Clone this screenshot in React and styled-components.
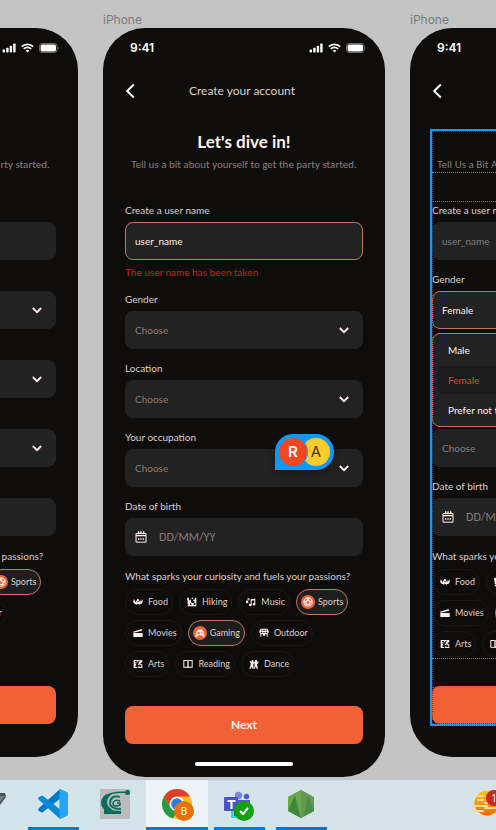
import React, { useId, useState } from "react";
import styled, { createGlobalStyle, css } from "styled-components";

const color = {
  canvas: "#c4c4c4",
  screen: "#0e0d0b",
  field: "#222222",
  coral: "#c4755c",
  orange: "#f26135",
  text: "#ddd0cd",
  bright: "#fff1ed",
  muted: "#857d7b",
  error: "#cc1c1c",
  select: "#0d99ff",
};

const GlobalStyle = createGlobalStyle`
  *, *::before, *::after { box-sizing: border-box; }
  html, body { margin: 0; background: ${color.canvas}; }
  body, button, input, select { font-family: Lato, Carlito, "Open Sans", sans-serif; }
  button { border: 0; padding: 0; background: none; cursor: pointer; }
  svg { display: block; flex: none; }
`;

const Desktop = styled.div`
  display: flex;
  flex-direction: column;
  min-height: 100vh;
`;

const Canvas = styled.main`
  flex: 1;
  display: flex;
  justify-content: center;
  align-items: flex-start;
  gap: 25px;
  padding: 12px 8px 3px 0;
  overflow: hidden;
  background: ${color.canvas};
`;

const Frame = styled.section`
  flex: none;
  width: 282px;
`;

const FrameName = styled.h2`
  margin: 0;
  height: 16px;
  font: 400 12px/16px Inter, sans-serif;
  color: #7b7b7b;
`;

const Screen = styled.div`
  display: flex;
  flex-direction: column;
  padding: 0 22px 11px;
  border-radius: 42px;
  background: ${color.screen};
  color: ${color.text};
`;

const StatusBar = styled.div`
  display: flex;
  align-items: center;
  justify-content: space-between;
  height: 40px;
  padding: 0 0 0 5px;
  margin-right: -3px;
`;

const Clock = styled.span`
  font: 600 12px/16px Inter, sans-serif;
  color: #fff;
`;

const StatusIcons = styled.div`
  display: flex;
  align-items: center;
  gap: 5px;
`;

const NavBar = styled.header`
  display: grid;
  grid-template-columns: 12px 1fr 12px;
  align-items: center;
  height: 46px;
  margin-bottom: 17px;
  padding-right: 4px;
`;

const NavTitle = styled.h3`
  margin: 0;
  text-align: center;
  font-size: 12px;
  line-height: 18px;
  font-weight: 400;
`;

const Body = styled.form`
  position: relative;
  display: flex;
  flex-direction: column;
`;

const Title = styled.h1`
  margin: 0 0 4px;
  text-align: center;
  font-size: 17px;
  line-height: 22px;
  font-weight: 700;
  color: ${color.bright};
`;

const Subtitle = styled.p`
  display: flex;
  justify-content: center;
  margin: 0 0 28px;
  font-family: Carlito, Lato, sans-serif;
  font-size: 11px;
  line-height: 16px;
  white-space: nowrap;
  color: ${color.muted};
`;

const Group = styled.div`
  position: relative;
  display: flex;
  flex-direction: column;
  margin-bottom: 10px;
`;

const labelText = css`
  margin: 0 0 3px;
  font-size: 10px;
  line-height: 18px;
  font-weight: 400;
  color: ${color.text};
`;

const Label = styled.label`${labelText}`;

const Box = styled.div`
  display: flex;
  align-items: center;
  height: 38px;
  padding: 0 13px 0 9px;
  gap: 12px;
  border: 1px solid ${(p) => (p.$active ? color.coral : color.field)};
  border-radius: 8px;
  background: ${color.field};
`;

const control = css`
  flex: 1;
  min-width: 0;
  padding: 0;
  border: 0;
  outline: 0;
  background: transparent;
  appearance: none;
  font-size: 10px;
  line-height: 16px;
`;

const TextInput = styled.input`
  ${control}
  color: ${color.bright};
  &::placeholder { color: ${color.muted}; opacity: 1; }
`;

const DateInput = styled(TextInput)`
  font-family: Carlito, Lato, sans-serif;
  font-size: 12px;
`;

const Select = styled.select`
  ${control}
  color: ${(p) => (p.value ? color.bright : color.muted)};
`;

const ErrorText = styled.p`
  margin: 4px 0 0;
  font-size: 10px;
  line-height: 16px;
  color: ${color.error};
`;

const Menu = styled.ul`
  position: absolute;
  z-index: 2;
  top: 100%;
  left: 0;
  right: 0;
  display: flex;
  flex-direction: column;
  gap: 2px;
  margin: 4px 0 0;
  padding: 2px 5px;
  border: 1px solid ${color.coral};
  border-radius: 8px;
  background: ${color.field};
  list-style: none;
`;

const Option = styled.li`
  padding: 0 10px;
  border-radius: 6px;
  font-size: 10px;
  line-height: 28px;
  color: ${(p) => (p.$chosen ? "#d3502b" : color.bright)};
  background: ${(p) => (p.$chosen ? "#1b1b1b" : "transparent")};
`;

const Passions = styled.fieldset`
  min-width: 0;
  margin: 1px 0 29px;
  padding: 0;
  border: 0;
`;

const Legend = styled.legend`
  ${labelText}
  margin-bottom: 4px;
  padding: 0;
  white-space: nowrap;
`;

const ChipRows = styled.div`
  display: flex;
  flex-direction: column;
  gap: 5px;
`;

const ChipRow = styled.div`
  display: flex;
  gap: 6px;
`;

const Chip = styled.button`
  display: flex;
  align-items: center;
  gap: ${(p) => (p.$on ? 3 : 5)}px;
  height: 26px;
  padding: 0 4px 0 ${(p) => (p.$on ? 4 : 7)}px;
  border: 1px solid ${(p) => (p.$on ? color.coral : "#1a1917")};
  border-radius: 13px;
  background: ${(p) => (p.$on ? "#1e1e1e" : "transparent")};
  font-size: 9px;
  line-height: 14px;
  color: ${color.text};
`;

const ChipIcon = styled.span`
  display: grid;
  place-items: center;
  width: ${(p) => (p.$on ? 14 : 10)}px;
  height: 14px;
  border-radius: 50%;
  background: ${(p) => (p.$on ? color.orange : "transparent")};
`;

const NextButton = styled.button`
  height: 38px;
  border-radius: 8px;
  background: ${color.orange};
  font-size: 12px;
  line-height: 18px;
  font-weight: 700;
  color: ${color.bright};
`;

const HomeIndicator = styled.div`
  align-self: center;
  width: 98px;
  height: 4px;
  margin-top: 18px;
  border-radius: 2px;
  background: #fff;
`;

const SelectionOutline = styled.div`
  position: absolute;
  z-index: 3;
  inset: -2px;
  display: flex;
  flex-direction: column;
  justify-content: space-between;
  padding: 41px 0 36px;
  border: 2px solid ${color.select};
  outline: 1px dotted #0d5b96;
  outline-offset: -3px;
  pointer-events: none;
`;

const SpacingBand = styled.div`
  height: 30px;
  border: dotted #2391e6;
  border-width: 1px 0;
`;

const Collaborators = styled.div`
  position: absolute;
  z-index: 2;
  top: 6px;
  right: 29px;
  display: flex;
  padding: 4px;
  border-radius: 18px 18px 18px 0;
  background: ${color.select};
  box-shadow: 0 3px 8px rgba(0, 0, 0, 0.3);
`;

const Avatar = styled.span`
  display: grid;
  place-items: center;
  width: 28px;
  height: 28px;
  border-radius: 50%;
  font: ${(p) => (p.$bold ? 600 : 400)} 15px/20px Inter, sans-serif;
  color: ${(p) => (p.$bold ? "#fff" : "#44330a")};
  background: ${(p) => p.$tone};
  & + & { margin-left: -5px; }
  &:first-child { z-index: 1; box-shadow: 0 0 0 1px ${color.select}; }
`;

const Taskbar = styled.nav`
  display: flex;
  height: 50px;
  overflow: hidden;
  background: linear-gradient(90deg, #d3e4eb, #d7e3e9);
`;

const Task = styled.button`
  flex: none;
  display: grid;
  grid-template-rows: 47px 3px;
  justify-items: center;
  width: 62px;
  background: ${(p) => (p.$active ? "#edf3f6" : "transparent")};
  &:first-child { margin-left: -40px; }
  &:last-child { margin-left: auto; margin-right: -22px; }
  &::after {
    content: "";
    width: ${(p) => (p.$active ? 62 : 51)}px;
    height: 3px;
    background: ${(p) => (p.$open ? "#0078d4" : "transparent")};
  }
`;

const TaskIcon = styled.span`
  position: relative;
  align-self: center;
  display: block;
`;

const Badge = styled.span`
  position: absolute;
  left: ${(p) => p.$left}px;
  top: ${(p) => p.$top}px;
  display: grid;
  place-items: center;
  width: ${(p) => p.$size}px;
  height: ${(p) => p.$size}px;
  border-radius: 50%;
  background: ${(p) => p.$tone};
  color: #fff;
  font: 400 10px/12px "Open Sans", sans-serif;
`;

const chipArt = {
  Food: (
    <path d="M0 8h2v4h2V8h2v5l3 3v-4l3-2V6h5v4l3 2v4l3-3V8h2v4h2V8h2v8l-4 5h-3l-3 2-4-3-4 3-3-2H5l-4-5zM12 13v3h2v-3zm4 0v3h2v-3z" fillRule="evenodd" />
  ),
  Hiking: (
    <path d="M1 2h5v6l3 4V8h3v7l3 3h5l4-5h-5V8h4V2h5v26H2v-4h4l-4-4V10H0zM20 18v6h5v-6zM9 19v5h4v-4zM14 2h4v4h-4z" fillRule="evenodd" />
  ),
  Music: (
    <path d="M5 2l6 4v3L7 7v8a4 4 0 1 1-2-4zM14 7l14-2v17a4 4 0 1 1-3-4v-8l-8 1v13a4 4 0 1 1-3-4z" />
  ),
  Sports: (
    <path fillRule="evenodd" d="M15 1a14 14 0 1 0 0 28 14 14 0 0 0 0-28zm-2 4v3l-5 4-3-1 3-5zm4 0l5 1 3 5-3 1-5-4zm-2 6l5 4-2 5h-6l-2-5zM4 15l3 2 1 5-2 1zm22 0v5l-2 3-2-1 1-5zM12 23h6l1 2-4 1-4-1z" />
  ),
  Movies: <path d="M0 11L26 3l1 5L2 14zM1 15h28v12H1z" />,
  Gaming: (
    <path fillRule="evenodd" d="M8 5c1-2 3-3 5-3h4c2 0 4 1 5 3l-1 2h3l5 18-4 3-6-6h-8l-6 6-4-3L6 7h3zm3 1h8V4h-8zM9 11v3H6v3h3v3h3v-3h3v-3h-3v-3zm10 0v3h4v-3zm-1 5v3h4v-3z" />
  ),
  Outdoor: (
    <path fillRule="evenodd" d="M5 2h20l4 6v7h-3v11h-3v-7h-5v4h-6v-4H7v7H4V15H1V8zm2 4v3h3V6zm6 0v3h4V6zm7 0v3h3V6zM5 12v3h5v-3zm8 0v3h4v-3zm7 0v3h5v-3z" />
  ),
  Arts: (
    <path fillRule="evenodd" d="M2 3h18v3H6v4h5v3H6l4 5-3 3v3h6v3H2zM22 3h6v5l-9 9-5 2 2-5zM12 7h4v3h-4zM21 16h7v11H16v-6h3v3h6v-5h-4z" />
  ),
  Reading: (
    <path fillRule="evenodd" d="M1 3h12l2 2 2-2h12v23H17l-2 2-2-2H1zm3 3v17h9V6zm13 0v17h9V6z" />
  ),
  Dance: (
    <path fillRule="evenodd" d="M4 5l4 4V3h5v6l3-2v5l-3 3v5l1 9h-4l-2-6-3 6H1l4-11v-6L2 9zM19 3h5v6l4-3v6l-4 4 1 5 2 8h-4l-3-7-2 7h-3l2-12-1-6z" />
  ),
};

const passionRows = [
  ["Food", "Hiking", "Music", "Sports"],
  ["Movies", "Gaming", "Outdoor"],
  ["Arts", "Reading", "Dance"],
];

function StatusGlyphs() {
  return (
    <StatusIcons>
      <svg width="14" height="10" viewBox="0 0 14 10" fill="#fff" aria-label="Signal">
        <rect x="0.600" y="6.500" width="2.400" height="3" rx=".7" />
        <rect x="4.200" y="4.800" width="2.400" height="4.700" rx=".7" />
        <rect x="7.700" y="2.800" width="2.400" height="6.700" rx=".7" />
        <rect x="11.200" y="0.500" width="2.400" height="9" rx=".7" />
      </svg>
      <svg width="13" height="10" viewBox="0 0 13 10" fill="none" stroke="#fff" strokeWidth="1.7" aria-label="Wi-Fi">
        <path d="M.8 3.6a8.2 8.2 0 0 1 11.4 0M2.8 5.9a5.2 5.2 0 0 1 7.4 0" />
        <path d="M6.5 9.4L4.7 7.6a2.6 2.6 0 0 1 3.6 0z" fill="#fff" stroke="none" />
      </svg>
      <svg width="20" height="10" viewBox="0 0 20 10" aria-label="Battery">
        <rect x=".5" y=".5" width="17.6" height="9" rx="2.6" fill="none" stroke="#6d6c6b" />
        <rect x="1.6" y="1.6" width="15.4" height="6.8" rx="1.6" fill="#fff" />
        <path d="M18.8 3.4c1 .5 1 2.700 0 3.200z" fill="#6d6c6b" />
      </svg>
    </StatusIcons>
  );
}

function ChevronDown() {
  return (
    <svg width="10" height="10" viewBox="0 0 10 10" fill="none" stroke={color.bright} strokeWidth="1.8">
      <path d="M.8 3L5 7.200 9.200 3" />
    </svg>
  );
}

function CalendarIcon() {
  return (
    <svg width="12" height="12" viewBox="0 0 36 36" fill="none" stroke={color.bright} strokeWidth="3">
      <path d="M3 7.500h30v26H3z" />
      <path d="M3 14h30M11 1v9M18 1v9M26 1v9" strokeWidth="4" />
      <path d="M9 24h4m3 0h4m3 0h4" strokeWidth="4" />
    </svg>
  );
}

function SelectField({ label, menu, children }) {
  const id = useId();
  const [value, setValue] = useState(menu || "");
  const options = ["Male", "Female", "Prefer not to say"];
  return (
    <Group>
      <Label htmlFor={id}>{label}</Label>
      <Box $active={Boolean(menu)}>
        <Select id={id} value={value} onChange={(e) => setValue(e.target.value)}>
          <option value="">Choose</option>
          {label === "Gender" && options.map((o) => <option key={o}>{o}</option>)}
        </Select>
        <ChevronDown />
      </Box>
      {menu && (
        <Menu role="listbox" aria-label={label}>
          {options.map((o) => (
            <Option
              key={o}
              role="option"
              aria-selected={o === value}
              $chosen={o === value}
              onClick={() => setValue(o)}
            >
              {o}
            </Option>
          ))}
        </Menu>
      )}
      {children}
    </Group>
  );
}

function PassionPicker({ initial }) {
  const [chosen, setChosen] = useState(initial);
  const toggle = (name) =>
    setChosen((c) => (c.includes(name) ? c.filter((n) => n !== name) : [...c, name]));
  return (
    <Passions>
      <Legend>What sparks your curiosity and fuels your passions?</Legend>
      <ChipRows>
        {passionRows.map((row) => (
          <ChipRow key={row[0]}>
            {row.map((name) => {
              const on = chosen.includes(name);
              return (
                <Chip key={name} type="button" $on={on} aria-pressed={on} onClick={() => toggle(name)}>
                  <ChipIcon $on={on}>
                    <svg width="10" height="10" viewBox="0 0 30 30" fill={color.bright}>
                      {chipArt[name]}
                    </svg>
                  </ChipIcon>
                  {name}
                </Chip>
              );
            })}
          </ChipRow>
        ))}
      </ChipRows>
    </Passions>
  );
}

function Phone({ subtitle, username = "", error, gender, passions, shared, selected }) {
  const id = useId();
  return (
    <Frame>
      <FrameName>iPhone</FrameName>
      <Screen>
        <StatusBar>
          <Clock>9:41</Clock>
          <StatusGlyphs />
        </StatusBar>
        <NavBar>
          <button type="button" aria-label="Back">
            <svg width="12" height="16" viewBox="0 0 12 16" fill="none" stroke="#fff" strokeWidth="2">
              <path d="M8.800 1.500L2.200 8 8.800 14.500" />
            </svg>
          </button>
          <NavTitle>Create your account</NavTitle>
        </NavBar>
        <Body onSubmit={(e) => e.preventDefault()}>
          <Title>Let's dive in!</Title>
          <Subtitle>{subtitle}</Subtitle>
          <Group>
            <Label htmlFor={`${id}-name`}>Create a user name</Label>
            <Box $active={Boolean(error)}>
              <TextInput id={`${id}-name`} defaultValue={username} placeholder="user_name" />
            </Box>
            {error && <ErrorText role="alert">{error}</ErrorText>}
          </Group>
          <SelectField label="Gender" menu={gender} />
          <SelectField label="Location" />
          <SelectField label="Your occupation">
            {shared && (
              <Collaborators>
                <Avatar $tone="#f24822" $bold>R</Avatar>
                <Avatar $tone="#ffcd29">A</Avatar>
              </Collaborators>
            )}
          </SelectField>
          <Group>
            <Label htmlFor={`${id}-date`}>Date of birth</Label>
            <Box>
              <CalendarIcon />
              <DateInput id={`${id}-date`} placeholder="DD/MM/YY" />
            </Box>
          </Group>
          <PassionPicker initial={passions} />
          <NextButton type="submit">Next</NextButton>
          {selected && (
            <SelectionOutline>
              <SpacingBand />
              <SpacingBand />
            </SelectionOutline>
          )}
        </Body>
        <HomeIndicator />
      </Screen>
    </Frame>
  );
}

function PenIcon() {
  return (
    <svg width="30" height="30" viewBox="0 0 30 30">
      <path d="M17 4h12l1 4-9 12-7-5z" fill="#4a4f52" />
      <path d="M21 7h8l-7 9z" fill="#777d80" />
    </svg>
  );
}

function CodeIcon() {
  return (
    <svg width="30" height="30" viewBox="0 0 30 30">
      <path d="M22 0L1 19c-1 1-1 2 0 3l2 1c1 1 1.500.500 2 0L23 9z" fill="#0179cb" />
      <path d="M22 30L1 11c-1-1-1-2 0-3l2-1c1-1 1.500-.500 2 0L23 21z" fill="#0b8ad8" />
      <path d="M22 0l7 3c.7.300 1 1 1 1.600v20.800c0 .7-.3 1.300-1 1.600l-7 3c-.8-.5-.6-1.500-.6-2.500V2.500c0-1-.2-2 .6-2.500z" fill="#27a5f3" />
    </svg>
  );
}

function OrbitIcon() {
  return (
    <svg width="30" height="30" viewBox="0 0 30 30">
      <path d="M0 0h30v30H0z" fill="#b9bcba" />
      <path d="M7 5C3 7 1 11 1 14s2 6 5 7h7c-4-2-6-5-6-8s2-6 5-8z" fill="#0b6b5e" />
      <path d="M27 3.500C18 3 9 4 4 8" fill="none" stroke="#0b6b5e" strokeWidth="1.500" />
      <path d="M20 8c-6-2-10 1-10 6 0 3 3 6 11 6" fill="none" stroke="#0b6b5e" strokeWidth="1.800" />
      <path d="M20 12c-4-2-7 0-7 2.500s3 3.500 7 1.500v-2h-3" fill="none" stroke="#0b6b5e" strokeWidth="1.500" />
      <path d="M4 20l5 1 12 1v3H4z" fill="#0b6b5e" />
      <circle cx="27.500" cy="3.500" r="2.500" fill="#0b6b5e" />
    </svg>
  );
}

function BrowserIcon() {
  return (
    <svg width="30" height="30" viewBox="0 0 30 30">
      <circle cx="15" cy="15" r="15" fill="#fbc21d" />
      <path d="M2 7.500A15 15 0 0 1 15 0a15 15 0 0 1 13 7.500H15a7.500 7.500 0 0 0-6.500 11.300z" fill="#e33b2e" />
      <path d="M2 7.500L8.500 18.800 15 22.500 11 29.500A15 15 0 0 1 2 7.500z" fill="#229a48" />
      <circle cx="15" cy="15" r="7.300" fill="#fff" />
      <circle cx="15" cy="15" r="5.800" fill="#2f7de9" />
    </svg>
  );
}

function TeamsIcon() {
  return (
    <svg width="30" height="30" viewBox="0 0 30 30">
      <circle cx="14.500" cy="6.500" r="3.700" fill="#7b83eb" />
      <circle cx="22.500" cy="7.500" r="2.700" fill="#5059c9" />
      <path d="M13 11h13v8a6 6 0 0 1-6 6h-7z" fill="#5059c9" />
      <path d="M7 19h9v10H7z" fill="#26dfe8" />
      <path d="M10 21h4v6h-4z" fill="#073c4a" />
      <rect width="14" height="14" y="8" rx="1" fill="#4b53bc" />
      <path d="M3.500 11h8v2H8.600v7H6.400v-7H3.500z" fill="#fff" />
    </svg>
  );
}

function HexIcon() {
  return (
    <svg width="28" height="30" viewBox="0 0 28 30">
      <path d="M14 1l13 7v14l-13 7L1 22V8z" fill="#5fa04e" />
      <path d="M14 1L1 8v14L14 1z" fill="#63ad46" />
      <path d="M1 22L8 6l6 23z" fill="#3f873f" />
      <path d="M14 1l7 5 6 16-13 7L8 6z" fill="#649752" />
      <path d="M8 5l6-4v28z" fill="#6fa64f" />
      <path d="M21 6l6 16-10 5z" fill="#4b8f46" />
    </svg>
  );
}

function WeatherIcon() {
  return (
    <svg width="32" height="28" viewBox="0 0 32 28">
      <defs>
        <linearGradient id="sun" x2="0" y2="1">
          <stop stopColor="#ffc900" />
          <stop offset="1" stopColor="#f06a00" />
        </linearGradient>
      </defs>
      <circle cx="16" cy="13" r="12.500" fill="url(#sun)" />
      <path d="M6 6h6M7 10h5M2 16h14M0 21h12M14 13h12M14 18h14" stroke="#efdc9c" strokeWidth="2" strokeLinecap="round" />
    </svg>
  );
}

export default function App() {
  const intro = "Tell us a bit about yourself to get the party started.";
  return (
    <>
      <GlobalStyle />
      <Desktop>
        <Canvas>
          <Phone subtitle={intro} passions={["Sports"]} />
          <Phone
            subtitle={intro}
            username="user_name"
            error="The user name has been taken"
            passions={["Sports", "Gaming"]}
            shared
          />
          <Phone
            subtitle="Tell Us a Bit About Yourself to Get the Party Started"
            gender="Female"
            passions={["Sports", "Gaming"]}
            selected
          />
        </Canvas>
        <Taskbar aria-label="Taskbar">
          <Task aria-label="Design tool">
            <TaskIcon><PenIcon /></TaskIcon>
          </Task>
          <Task $open aria-label="Code editor">
            <TaskIcon><CodeIcon /></TaskIcon>
          </Task>
          <Task aria-label="Orbit">
            <TaskIcon><OrbitIcon /></TaskIcon>
          </Task>
          <Task $open $active aria-label="Browser">
            <TaskIcon>
              <BrowserIcon />
              <Badge $left={12} $top={12} $size={20} $tone="#e8710a">B</Badge>
            </TaskIcon>
          </Task>
          <Task $open aria-label="Teams">
            <TaskIcon>
              <TeamsIcon />
              <Badge $left={10} $top={12} $size={20} $tone="#13a10e">
                <svg width="10" height="8" viewBox="0 0 10 8" fill="none" stroke="#fff" strokeWidth="2">
                  <path d="M1 4l3 3 5-6" />
                </svg>
              </Badge>
            </TaskIcon>
          </Task>
          <Task $open aria-label="Node">
            <TaskIcon><HexIcon /></TaskIcon>
          </Task>
          <Task aria-label="Weather">
            <TaskIcon>
              <WeatherIcon />
              <Badge $left={15} $top={0} $size={16} $tone="#c42b1c">1</Badge>
            </TaskIcon>
          </Task>
        </Taskbar>
      </Desktop>
    </>
  );
}
